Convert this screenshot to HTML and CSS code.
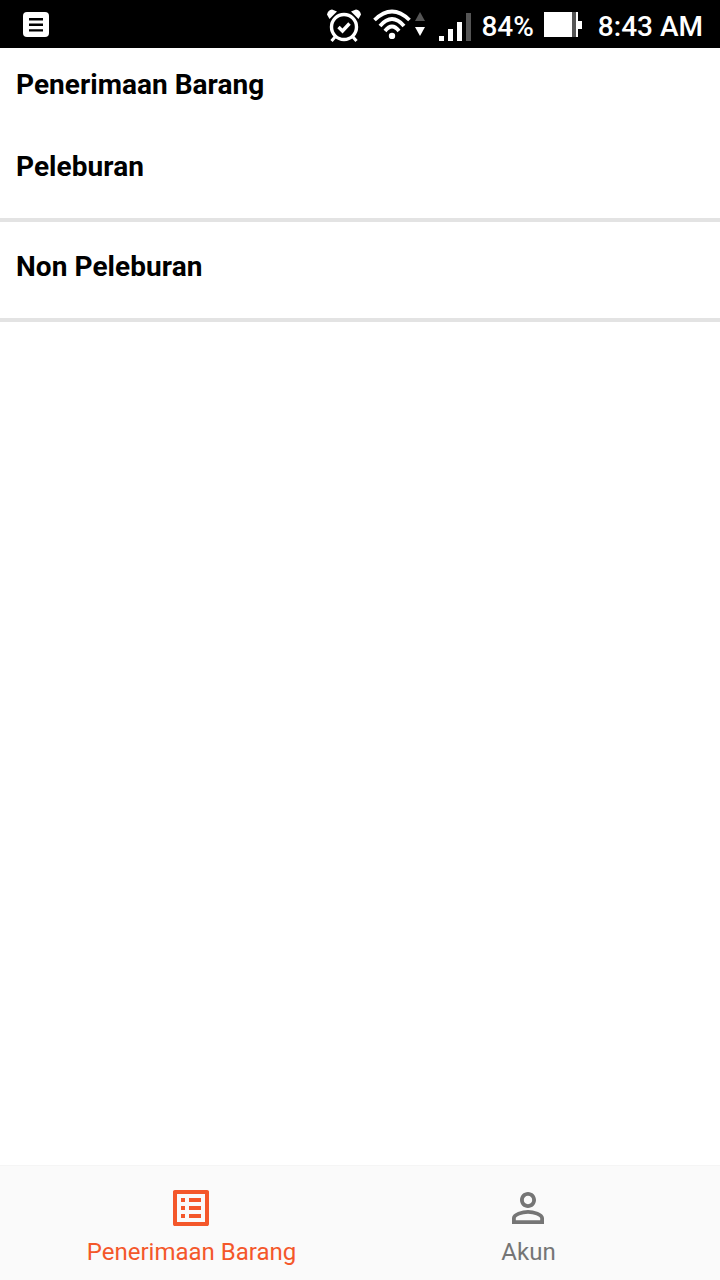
FILE: index.html
```html
<!DOCTYPE html>
<html lang="en">

<head>
    <meta charset="UTF-8">
    <meta name="viewport" content="width=device-width, initial-scale=1.0">
    <title>Penerimaan Barang</title>
    <link rel="stylesheet" href="styles.css">
</head>

<body>
    <div class="app">
        <!-- status bar -->
        <div class="status-bar">
            <svg class="ic-note" width="26" height="25" viewBox="0 0 26 25">
                <rect width="26" height="25" rx="4" fill="#fff" />
                <path d="M6 6h14v2.4H6zM6 11.6h14V14H6zM6 17.2h14v2.4H6z" fill="#000" />
            </svg>
            <div class="status-right">
                <svg class="ic-alarm" width="34" height="33" viewBox="0 0 34 33" fill="none" stroke="#fff">
                    <circle cx="17" cy="18" r="12.5" stroke-width="3.4" />
                    <path d="M11.5 18l4 4 7-7.5" stroke-width="3.4" />
                    <path d="M0 5.5Q1 1 5 .5L10 2.5 2.5 10z" fill="#fff" stroke="none" />
                    <path d="M34 5.5Q33 1 29 .5L24 2.5 31.5 10z" fill="#fff" stroke="none" />
                    <path d="M8 28l-3.5 4M26 28l3.5 4" stroke-width="3" />
                </svg>
                <svg class="ic-wifi" width="38" height="30" viewBox="0 0 38 30" fill="none" stroke="#fff" stroke-width="3.8">
                    <path d="M1.5 11Q19-6 36.5 11" />
                    <path d="M7 17Q19 3 31 17" />
                    <path d="M12 22Q19 13 26 22" />
                    <circle cx="19" cy="27" r="3.2" fill="#fff" stroke="none" />
                </svg>
                <svg class="ic-arrows" width="10" height="24" viewBox="0 0 10 24">
                    <path d="M5 0l5 9H0z" fill="#555" />
                    <path d="M0 15h10l-5 9z" fill="#fff" />
                </svg>
                <div class="signal">
                    <span class="bar bar-1"></span>
                    <span class="bar bar-2"></span>
                    <span class="bar bar-3"></span>
                    <span class="bar bar-4"></span>
                </div>
                <span class="status-text pct">84%</span>
                <div class="battery">
                    <div class="battery-body"></div>
                    <div class="battery-nub"></div>
                </div>
                <span class="status-text time">8:43 AM</span>
            </div>
        </div>

        <!-- isi -->
        <div class="content">
            <div class="page-title">Penerimaan Barang</div>
            <div class="menu-item">Peleburan</div>
            <div class="menu-item">Non Peleburan</div>
        </div>

        <!-- tab bawah -->
        <div class="tab-bar">
            <div class="tab active">
                <svg width="48" height="48" viewBox="0 0 24 24" fill="currentColor">
                    <path d="M19 5v14H5V5h14m1.1-2H3.9c-.5 0-.9.4-.9.9v16.2c0 .4.4.9.9.9h16.2c.4 0 .9-.5.9-.9V3.9c0-.5-.5-.9-.9-.9zM11 7h6v2h-6V7zm0 4h6v2h-6v-2zm0 4h6v2h-6zM7 7h2v2H7zm0 4h2v2H7zm0 4h2v2H7z" />
                </svg>
                <span class="tab-label">Penerimaan Barang</span>
            </div>
            <div class="tab">
                <svg width="48" height="48" viewBox="0 0 24 24" fill="currentColor">
                    <path d="M12 5.9c1.16 0 2.1.94 2.1 2.1s-.94 2.1-2.1 2.1S9.9 9.16 9.9 8s.94-2.1 2.1-2.1m0 9c2.97 0 6.1 1.46 6.1 2.1v1.1H5.9V17c0-.64 3.13-2.1 6.1-2.1M12 4C9.79 4 8 5.79 8 8s1.79 4 4 4 4-1.79 4-4-1.79-4-4-4zm0 9c-2.67 0-8 1.34-8 4v3h16v-3c0-2.66-5.33-4-8-4z" />
                </svg>
                <span class="tab-label">Akun</span>
            </div>
        </div>
    </div>
</body>

</html>
```

FILE: styles.css
```css
body {
    margin: 0;
    padding: 0;
    background: #fff;
    font-family: Roboto, "Liberation Sans", sans-serif;
}

.app {
    height: 1280px;
    display: flex;
    flex-direction: column;
    overflow: hidden;
}

/* status bar */
.status-bar {
    height: 48px;
    flex-shrink: 0;
    background: #000;
    color: #fff;
    display: flex;
    align-items: center;
    justify-content: space-between;
    padding: 0 17px 0 23px;
}

.ic-note {
    margin-top: 1px;
}

.status-right {
    display: flex;
    align-items: center;
}

.ic-alarm {
    margin-top: 2px;
}

.ic-wifi {
    margin-left: 12px;
}

.ic-arrows {
    margin-left: 4px;
}

.signal {
    margin-left: 14px;
    height: 28px;
    margin-top: 6px;
    display: flex;
    align-items: flex-end;
    gap: 4px;
}

.bar {
    width: 5px;
    background: #fff;
}

.bar-1 {
    height: 5px;
}

.bar-2 {
    height: 12px;
}

.bar-3 {
    height: 19px;
}

.bar-4 {
    height: 28px;
    background: #555;
}

.status-text {
    font-size: 28px;
    font-weight: 500;
    line-height: 48px;
    margin-top: 5px;
}

.pct {
    margin-left: 10px;
}

.battery {
    margin-left: 10px;
    margin-top: 1px;
    display: flex;
    align-items: center;
}

.battery-body {
    width: 34px;
    height: 25px;
    background: linear-gradient(to right, #fff 28px, #555 28px, #555 32px, #fff 32px);
}

.battery-nub {
    width: 4px;
    height: 8px;
    background: #fff;
}

.time {
    margin-left: 16px;
}

/* isi */
.content {
    flex: 1;
}

.page-title {
    font-size: 28px;
    font-weight: 700;
    color: #000;
    padding: 20px 16px 21px;
    letter-spacing: 0.03px;
}

.menu-item {
    font-size: 28px;
    font-weight: 700;
    color: #000;
    padding: 28px 16px 35px;
    border-bottom: 4px solid #e3e3e3;
    letter-spacing: 0.06px;
}

/* tab bawah */
.tab-bar {
    height: 115px;
    flex-shrink: 0;
    box-sizing: border-box;
    background: #fafafa;
    border-top: 1px solid #f5f5f5;
    padding: 18px 23px 0;
    display: grid;
    grid-template-columns: 1fr 1fr;
}

.tab {
    display: flex;
    flex-direction: column;
    align-items: center;
    color: #757575;
}

.tab svg {
    margin-right: 1px;
}

.tab.active {
    color: #f4572a;
}

.tab-label {
    font-size: 24px;
    line-height: 28px;
    margin-top: 6px;
}
```
